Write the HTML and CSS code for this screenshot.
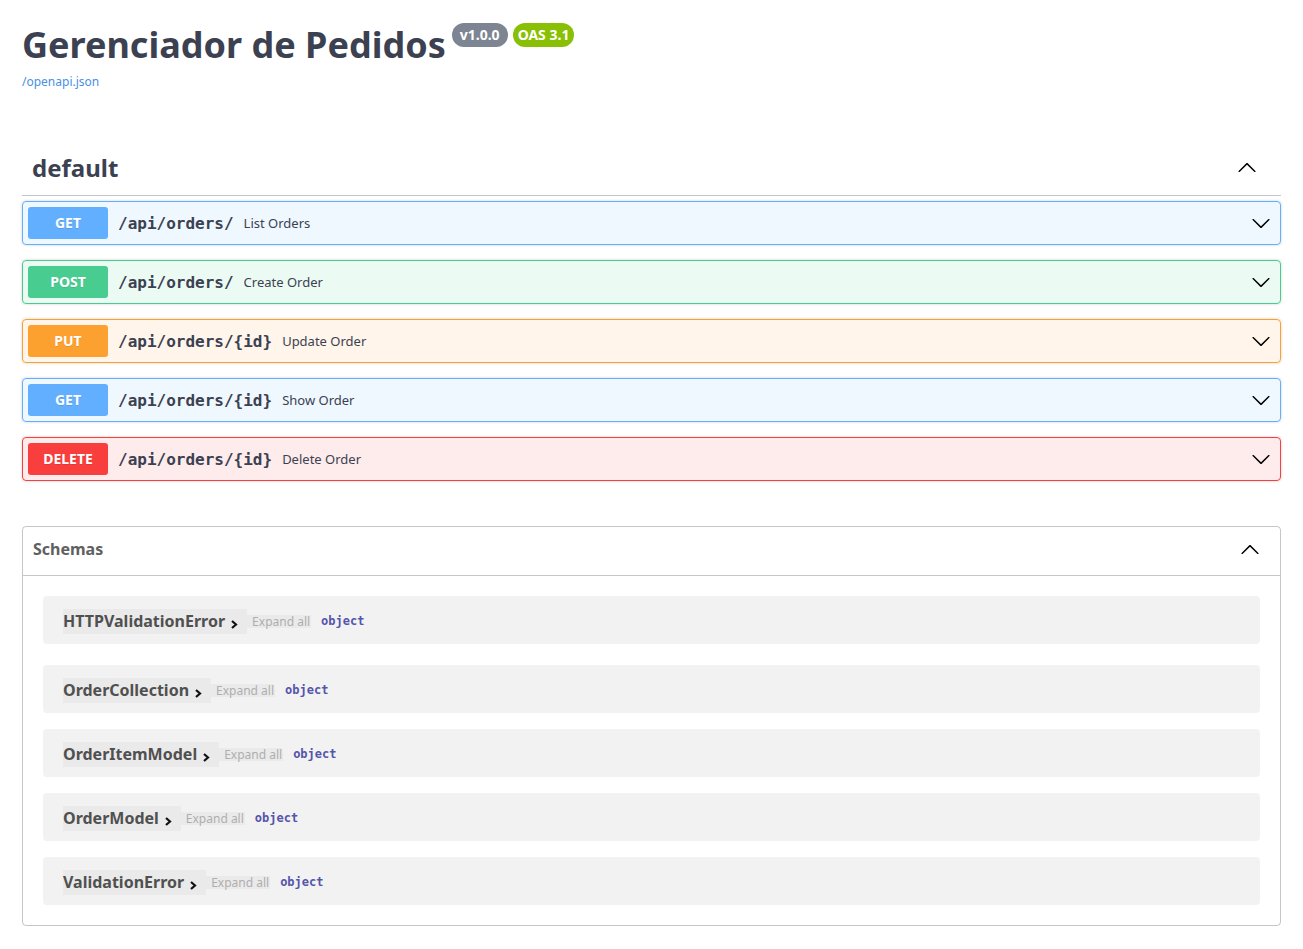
FILE: index.html
```html
<!DOCTYPE html>
<html lang="pt">
<head>
<meta charset="utf-8">
<title>Gerenciador de Pedidos</title>
<link rel="stylesheet" href="styles.css">
</head>
<body>
<div class="wrapper">
  <section class="info">
    <h2 class="title">Gerenciador de Pedidos<span class="badge version">v1.0.0</span><span class="badge oas">OAS 3.1</span></h2>
    <a class="spec-link" href="#">/openapi.json</a>
  </section>

  <section class="tag-section">
    <h3 class="tag">
      <span class="tag-name">default</span>
      <button class="expand-btn" aria-label="collapse">
        <svg viewBox="0 0 20 20" width="20" height="20"><path d="M17.418 14.908c.272.268.709.268.979 0s.271-.701 0-.969l-7.908-7.83c-.27-.268-.707-.268-.979 0l-7.908 7.83c-.27.268-.27.701 0 .969.271.268.709.268.979 0L10 7.75l7.418 7.158z"/></svg>
      </button>
    </h3>

    <div class="opblock get">
      <span class="method">GET</span>
      <span class="path">/api/orders/</span>
      <span class="desc">List Orders</span>
      <svg class="arrow" viewBox="0 0 20 20" width="20" height="20"><path d="M17.418 6.109c.272-.268.709-.268.979 0s.271.701 0 .969l-7.908 7.83c-.27.268-.707.268-.979 0l-7.908-7.83c-.27-.268-.27-.701 0-.969.271-.268.709-.268.979 0L10 13.25l7.418-7.141z"/></svg>
    </div>
    <div class="opblock post">
      <span class="method">POST</span>
      <span class="path">/api/orders/</span>
      <span class="desc">Create Order</span>
      <svg class="arrow" viewBox="0 0 20 20" width="20" height="20"><path d="M17.418 6.109c.272-.268.709-.268.979 0s.271.701 0 .969l-7.908 7.83c-.27.268-.707.268-.979 0l-7.908-7.83c-.27-.268-.27-.701 0-.969.271-.268.709-.268.979 0L10 13.25l7.418-7.141z"/></svg>
    </div>
    <div class="opblock put">
      <span class="method">PUT</span>
      <span class="path">/api/orders/{id}</span>
      <span class="desc">Update Order</span>
      <svg class="arrow" viewBox="0 0 20 20" width="20" height="20"><path d="M17.418 6.109c.272-.268.709-.268.979 0s.271.701 0 .969l-7.908 7.83c-.27.268-.707.268-.979 0l-7.908-7.83c-.27-.268-.27-.701 0-.969.271-.268.709-.268.979 0L10 13.25l7.418-7.141z"/></svg>
    </div>
    <div class="opblock get">
      <span class="method">GET</span>
      <span class="path">/api/orders/{id}</span>
      <span class="desc">Show Order</span>
      <svg class="arrow" viewBox="0 0 20 20" width="20" height="20"><path d="M17.418 6.109c.272-.268.709-.268.979 0s.271.701 0 .969l-7.908 7.83c-.27.268-.707.268-.979 0l-7.908-7.83c-.27-.268-.27-.701 0-.969.271-.268.709-.268.979 0L10 13.25l7.418-7.141z"/></svg>
    </div>
    <div class="opblock delete">
      <span class="method">DELETE</span>
      <span class="path">/api/orders/{id}</span>
      <span class="desc">Delete Order</span>
      <svg class="arrow" viewBox="0 0 20 20" width="20" height="20"><path d="M17.418 6.109c.272-.268.709-.268.979 0s.271.701 0 .969l-7.908 7.83c-.27.268-.707.268-.979 0l-7.908-7.830c-.27-.268-.27-.701 0-.969.271-.268.709-.268.979 0L10 13.25l7.418-7.141z"/></svg>
    </div>
  </section>

  <section class="models">
    <h4 class="models-head">
      <span>Schemas</span>
      <svg viewBox="0 0 20 20" width="20" height="20"><path d="M17.418 14.908c.272.268.709.268.979 0s.271-.701 0-.969l-7.908-7.83c-.27-.268-.707-.268-.979 0l-7.908 7.83c-.27.268-.27.701 0 .969.271.268.709.268.979 0L10 7.75l7.418 7.158z"/></svg>
    </h4>
    <div class="model-list">
      <div class="model">
        <span class="model-name">HTTPValidationError<svg class="chev" viewBox="0 0 7 9" width="7" height="9"><path d="M1 1l4 3.5L1 8" /></svg></span>
        <span class="expand-all">Expand all</span>
        <span class="type">object</span>
      </div>
      <div class="model">
        <span class="model-name">OrderCollection<svg class="chev" viewBox="0 0 7 9" width="7" height="9"><path d="M1 1l4 3.5L1 8" /></svg></span>
        <span class="expand-all">Expand all</span>
        <span class="type">object</span>
      </div>
      <div class="model">
        <span class="model-name">OrderItemModel<svg class="chev" viewBox="0 0 7 9" width="7" height="9"><path d="M1 1l4 3.5L1 8" /></svg></span>
        <span class="expand-all">Expand all</span>
        <span class="type">object</span>
      </div>
      <div class="model">
        <span class="model-name">OrderModel<svg class="chev" viewBox="0 0 7 9" width="7" height="9"><path d="M1 1l4 3.5L1 8" /></svg></span>
        <span class="expand-all">Expand all</span>
        <span class="type">object</span>
      </div>
      <div class="model">
        <span class="model-name">ValidationError<svg class="chev" viewBox="0 0 7 9" width="7" height="9"><path d="M1 1l4 3.5L1 8" /></svg></span>
        <span class="expand-all">Expand all</span>
        <span class="type">object</span>
      </div>
    </div>
  </section>
</div>
</body>
</html>
```

FILE: styles.css
```css
* { box-sizing: border-box; }

html, body {
  margin: 0;
  padding: 0;
  background: #fff;
}

body {
  font-family: "Noto Sans", "Open Sans", sans-serif;
  color: #3b4151;
}

.wrapper {
  padding: 0 22px 20px;
}

/* ---------- info ---------- */
.info {
  padding-top: 20px;
  margin-bottom: 50px;
}

.title {
  margin: 0;
  font-size: 36px;
  font-weight: 700;
  color: #3b4151;
  line-height: 49px;
}

.badge {
  display: inline-block;
  position: relative;
  top: -13px;
  vertical-align: middle;
  color: #fff;
  font-size: 14px;
  font-weight: 700;
  line-height: 20px;
  padding: 2px 8px;
  border-radius: 57px;
  margin-left: 5px;
}

.badge.version { background: #7d8492; margin-left: 6px; }
.badge.oas { background: #89bf04; padding: 2px 5px; }

.spec-link {
  display: inline-block;
  margin-top: 4px;
  font-size: 12px;
  color: #4990e2;
  text-decoration: none;
}

/* ---------- tag ---------- */
.tag-section {
  display: flex;
  flex-direction: column;
}

.tag {
  display: flex;
  align-items: center;
  margin: 0 0 5px;
  padding: 9px 20px 11px 10px;
  border-bottom: 1px solid rgba(59, 65, 81, 0.3);
  font-size: 24px;
  font-weight: 700;
  color: #3b4151;
  height: 55px;
}

.tag-name { flex: 1; }

.expand-btn {
  border: none;
  background: none;
  padding: 0;
  margin-right: 4px;
  display: flex;
}

.expand-btn svg { display: block; }

/* ---------- operations ---------- */
.opblock {
  display: flex;
  align-items: center;
  margin: 0 0 15px;
  padding: 5px;
  border: 1px solid;
  border-radius: 4px;
  box-shadow: 0 0 3px rgba(0, 0, 0, 0.19);
  height: 44px;
}

.method {
  min-width: 80px;
  padding: 6px 0;
  border-radius: 3px;
  color: #fff;
  font-size: 14px;
  font-weight: 700;
  line-height: 20px;
  text-align: center;
  text-shadow: 0 1px 0 rgba(0, 0, 0, 0.1);
}

.path {
  padding: 0 10px;
  font-family: "DejaVu Sans Mono", monospace;
  font-size: 16px;
  font-weight: 700;
  color: #3b4151;
}

.desc {
  flex: 1;
  font-size: 13px;
  color: #3b4151;
}

.arrow {
  display: block;
  margin-right: 4px;
}

.opblock.get { background: rgba(97, 175, 254, 0.1); border-color: #61affe; }
.opblock.get .method { background: #61affe; }
.opblock.post { background: rgba(73, 204, 144, 0.1); border-color: #49cc90; }
.opblock.post .method { background: #49cc90; }
.opblock.put { background: rgba(252, 161, 48, 0.1); border-color: #fca130; }
.opblock.put .method { background: #fca130; }
.opblock.delete { background: rgba(249, 62, 62, 0.1); border-color: #f93e3e; }
.opblock.delete .method { background: #f93e3e; }

/* ---------- models ---------- */
.models {
  margin-top: 30px;
  border: 1px solid rgba(59, 65, 81, 0.3);
  border-radius: 4px;
}

.models-head {
  display: flex;
  align-items: center;
  justify-content: space-between;
  margin: 0;
  padding: 8px 20px 12px 10px;
  height: 49px;
  border-bottom: 1px solid rgba(59, 65, 81, 0.3);
  font-size: 16px;
  font-weight: 700;
  color: #606060;
}

.models-head svg { display: block; }

.model-list {
  display: flex;
  flex-direction: column;
  gap: 16px;
  padding: 20px 20px 20px;
}

.model {
  display: flex;
  align-items: center;
  height: 48px;
  padding: 2px 20px 0;
  background: rgba(0, 0, 0, 0.05);
  border-radius: 4px;
}

.model:first-child { margin-bottom: 5px; }

.model-name {
  display: inline-flex;
  align-items: center;
  height: 25px;
  padding-right: 9px;
  background: rgba(0, 0, 0, 0.03);
  font-size: 16px;
  font-weight: 700;
  color: #505050;
}

.chev {
  display: block;
  margin-left: 6px;
  margin-top: 6px;
  fill: none;
  stroke: #111;
  stroke-width: 2.2;
}

.expand-all {
  display: inline-block;
  height: 13px;
  line-height: 13px;
  padding: 0 1px 0 5px;
  background: rgba(0, 0, 0, 0.03);
  font-size: 12px;
  color: #afaeae;
}

.type {
  margin-left: 10px;
  font-family: "DejaVu Sans Mono", monospace;
  font-size: 12px;
  font-weight: 700;
  color: #55a;
}
```
